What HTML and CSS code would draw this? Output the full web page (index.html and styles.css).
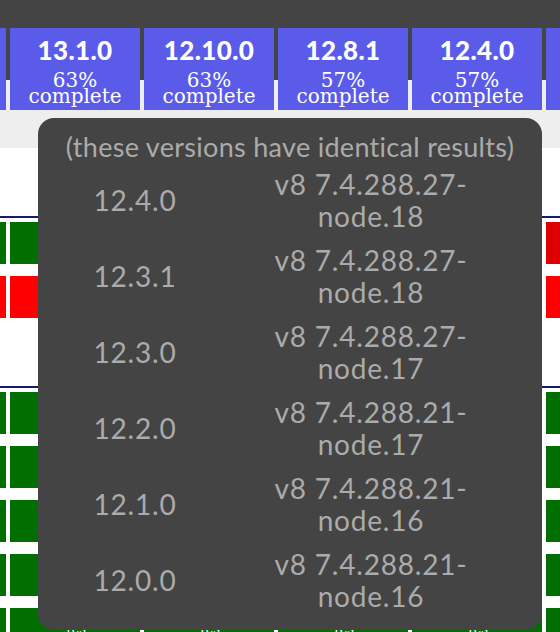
FILE: index.html
```html
<!DOCTYPE html>
<html>
<head>
<meta charset="utf-8">
<link rel="stylesheet" href="styles.css">
</head>
<body>
<div class="header">
  <div class="tiles">
    <div class="tile"><div class="ver">14.0.0</div><div class="pct">65%<br>complete</div></div>
    <div class="tile"><div class="ver">13.1.0</div><div class="pct">63%<br>complete</div></div>
    <div class="tile"><div class="ver">12.10.0</div><div class="pct">63%<br>complete</div></div>
    <div class="tile"><div class="ver">12.8.1</div><div class="pct">57%<br>complete</div></div>
    <div class="tile"><div class="ver">12.4.0</div><div class="pct">57%<br>complete</div></div>
    <div class="tile"><div class="ver">11.15.0</div><div class="pct">57%<br>complete</div></div>
  </div>
</div>
<div class="results">
  <div class="section">
    <div class="rule"></div>
    <div class="row">
      <div class="cell ok"></div><div class="cell ok"></div><div class="cell ok"></div><div class="cell ok"></div><div class="cell ok"></div><div class="cell warn"></div>
    </div>
    <div class="row">
      <div class="cell bad"></div><div class="cell bad"></div><div class="cell bad"></div><div class="cell bad"></div><div class="cell bad"></div><div class="cell bad"></div>
    </div>
  </div>
  <div class="gap"></div>
  <div class="section">
    <div class="rule"></div>
    <div class="row">
      <div class="cell ok"></div><div class="cell ok"></div><div class="cell ok"></div><div class="cell ok"></div><div class="cell ok"></div><div class="cell ok"></div>
    </div>
    <div class="row">
      <div class="cell ok"></div><div class="cell ok"></div><div class="cell ok"></div><div class="cell ok"></div><div class="cell ok"></div><div class="cell ok"></div>
    </div>
    <div class="row">
      <div class="cell ok"></div><div class="cell ok"></div><div class="cell ok"></div><div class="cell ok"></div><div class="cell ok"></div><div class="cell ok"></div>
    </div>
    <div class="row">
      <div class="cell ok"></div><div class="cell ok"></div><div class="cell ok"></div><div class="cell ok"></div><div class="cell ok"></div><div class="cell ok"></div>
    </div>
    <div class="row">
      <div class="cell ok txt">Yes</div><div class="cell ok txt">Yes</div><div class="cell ok txt">Yes</div><div class="cell ok txt">Yes</div><div class="cell ok txt">Yes</div><div class="cell ok txt">Yes</div>
    </div>
  </div>
</div>

<div class="tooltip">
  <div class="tip-title">(these versions have identical results)</div>
  <div class="tip-grid">
    <div class="tv">12.4.0</div><div class="te">v8 7.4.288.27-<br>node.18</div>
    <div class="tv">12.3.1</div><div class="te">v8 7.4.288.27-<br>node.18</div>
    <div class="tv">12.3.0</div><div class="te">v8 7.4.288.27-<br>node.17</div>
    <div class="tv">12.2.0</div><div class="te">v8 7.4.288.21-<br>node.17</div>
    <div class="tv">12.1.0</div><div class="te">v8 7.4.288.21-<br>node.16</div>
    <div class="tv">12.0.0</div><div class="te">v8 7.4.288.21-<br>node.16</div>
  </div>
</div>
</body>
</html>
```

FILE: styles.css
```css
html, body {
  margin: 0;
  padding: 0;
  background: #ffffff;
  overflow: hidden;
}
body {
  width: 560px;
  height: 632px;
  position: relative;
  font-family: "Lato", "DejaVu Sans", sans-serif;
}
.header {
  height: 148px;
  box-sizing: border-box;
  padding-top: 28px;
  background: linear-gradient(#444444 0, #444444 80px, #eeeeee 80px, #eeeeee 100%);
}
.tiles {
  display: flex;
  gap: 4px;
  margin-left: -124px;
}
.tile {
  flex: 0 0 130px;
  height: 82px;
  background: #5b5be9;
  color: #ffffff;
  text-align: center;
  box-sizing: border-box;
  padding-top: 6px;
}
.ver {
  font-family: "Lato", sans-serif;
  font-weight: 900;
  font-size: 26px;
  line-height: 32px;
  letter-spacing: 0.4px;
}
.pct {
  font-family: "DejaVu Serif", serif;
  font-size: 20px;
  line-height: 16px;
  margin-top: 6px;
}
.results {
  padding-top: 68px;
}
.rule {
  height: 2px;
  background: #1b1b6b;
  margin-bottom: 4px;
}
.row {
  display: flex;
  gap: 4px;
  margin-left: -124px;
  margin-bottom: 12px;
}
.cell {
  flex: 0 0 130px;
  height: 42px;
  color: #ffffff;
  font-family: "DejaVu Serif", serif;
  font-size: 13px;
  line-height: 42px;
  text-align: center;
}
.ok { background: #006e00; }
.bad { background: #ff0000; }
.warn { background: #dd0000; }
.gap {
  height: 56px;
}
.tooltip {
  position: absolute;
  left: 38px;
  top: 118px;
  width: 504px;
  height: 512px;
  box-sizing: border-box;
  padding-top: 14px;
  background: #444444;
  border-radius: 16px;
  color: #ababab;
}
.tip-title {
  text-align: center;
  font-size: 27px;
  line-height: 30px;
  letter-spacing: 0.3px;
  white-space: nowrap;
}
.tip-grid {
  display: grid;
  grid-template-columns: 194px 278px;
  grid-auto-rows: 76px;
  align-items: center;
  text-align: center;
  font-size: 28px;
  line-height: 32px;
  letter-spacing: 0.8px;
}
```
